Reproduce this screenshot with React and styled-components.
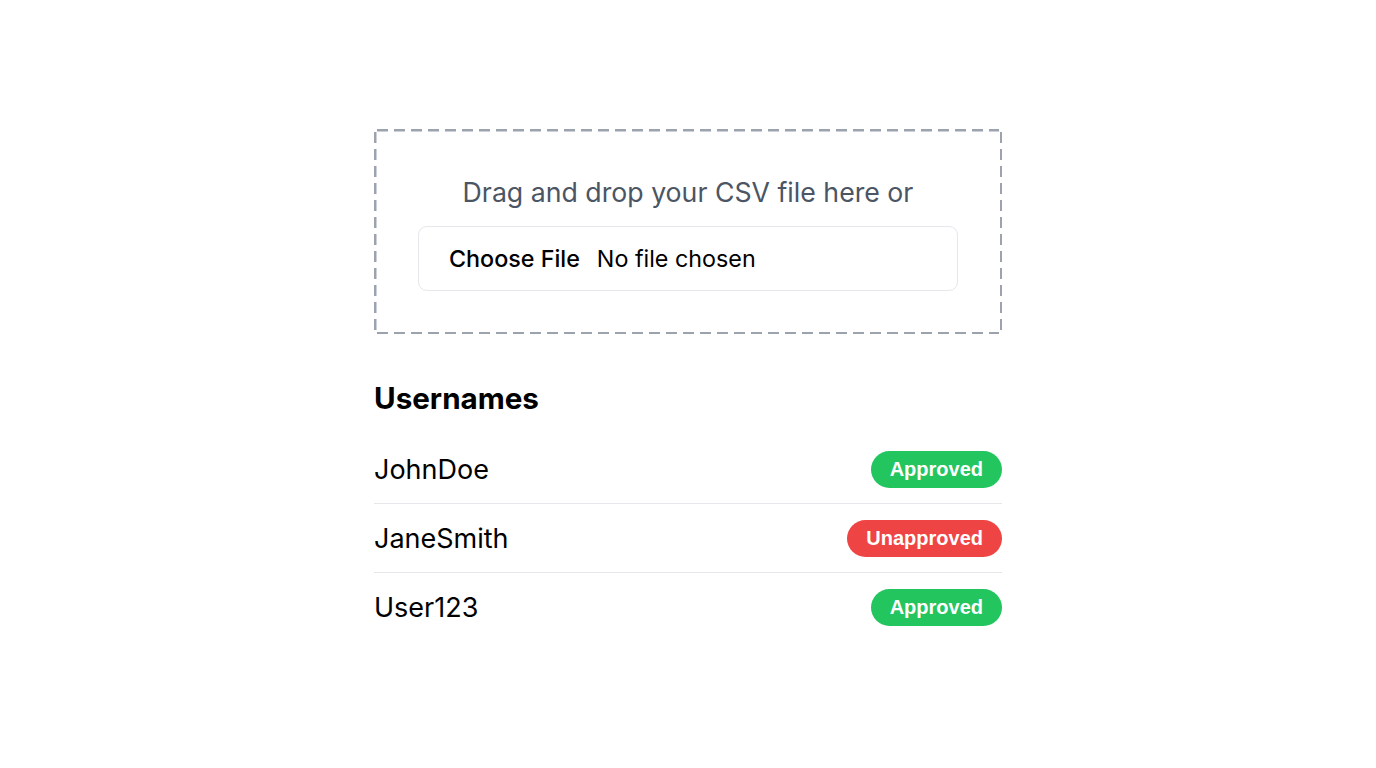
import React from "react";
import styled, { createGlobalStyle } from "styled-components";

const Global = createGlobalStyle`
  html, body { margin: 0; padding: 0; background: #fff; }
  body { font-family: Inter, "Noto Sans", sans-serif; color: #000; }
`;

const Page = styled.div`
  width: 628px;
  margin: 0 auto;
  padding-top: 129px;
`;

const dashH = "repeating-linear-gradient(90deg, #9ca3af 0 11px, transparent 11px 17px)";
const dashV = "repeating-linear-gradient(180deg, #9ca3af 0 11px, transparent 11px 17px)";

const DropZone = styled.div`
  padding: 45px 44px 43px;
  display: flex;
  flex-direction: column;
  align-items: center;
  gap: 16px;
  background:
    ${dashH} 3px 0 / calc(100% - 6px) 2.5px no-repeat,
    ${dashH} 3px 100% / calc(100% - 6px) 2.5px no-repeat,
    ${dashV} 0 3px / 2.5px calc(100% - 6px) no-repeat,
    ${dashV} 100% 3px / 2.5px calc(100% - 6px) no-repeat;
`;

const DropText = styled.p`
  margin: 0;
  font-size: 26.7px;
  line-height: 36px;
  color: #4b5563;
`;

const FileInput = styled.input`
  box-sizing: border-box;
  width: 540px;
  height: 65px;
  border: 1px solid #e5e7eb;
  border-radius: 9px;
  padding: 16px 30px;
  line-height: 31px;
  font-family: Inter, sans-serif;
  font-size: 23.3px;
  color: #000;
  background: #fff;

  &::file-selector-button {
    font-family: Inter, sans-serif;
    font-size: 23.3px;
    font-weight: 500;
    border: none;
    background: none;
    padding: 0;
    margin-right: 17px;
    color: #000;
  }
`;

const Heading = styled.h2`
  margin: 44px 0 17px;
  font-size: 29.6px;
  line-height: 40px;
  font-weight: 700;
`;

const List = styled.ul`
  list-style: none;
  margin: 0;
  padding: 0;
`;

const Row = styled.li`
  display: flex;
  align-items: center;
  justify-content: space-between;
  height: 68px;
  border-bottom: 1px solid #e5e7eb;
  &:last-child { border-bottom: none; }
`;

const Name = styled.span`
  font-size: 27px;
`;

const Badge = styled.span`
  font-family: "Liberation Sans", Arial, sans-serif;
  font-weight: 700;
  font-size: 20px;
  color: #fff;
  background: ${p => (p.$ok ? "#22c55e" : "#ef4444")};
  border-radius: 9999px;
  padding: 7px 19px;
  line-height: 23px;
`;

const users = [
  { name: "JohnDoe", ok: true },
  { name: "JaneSmith", ok: false },
  { name: "User123", ok: true },
];

export default function App() {
  return (
    <>
      <Global />
      <Page>
        <DropZone>
          <DropText>Drag and drop your CSV file here or</DropText>
          <FileInput type="file" accept=".csv" />
        </DropZone>
        <Heading>Usernames</Heading>
        <List>
          {users.map(u => (
            <Row key={u.name}>
              <Name>{u.name}</Name>
              <Badge $ok={u.ok}>{u.ok ? "Approved" : "Unapproved"}</Badge>
            </Row>
          ))}
        </List>
      </Page>
    </>
  );
}
